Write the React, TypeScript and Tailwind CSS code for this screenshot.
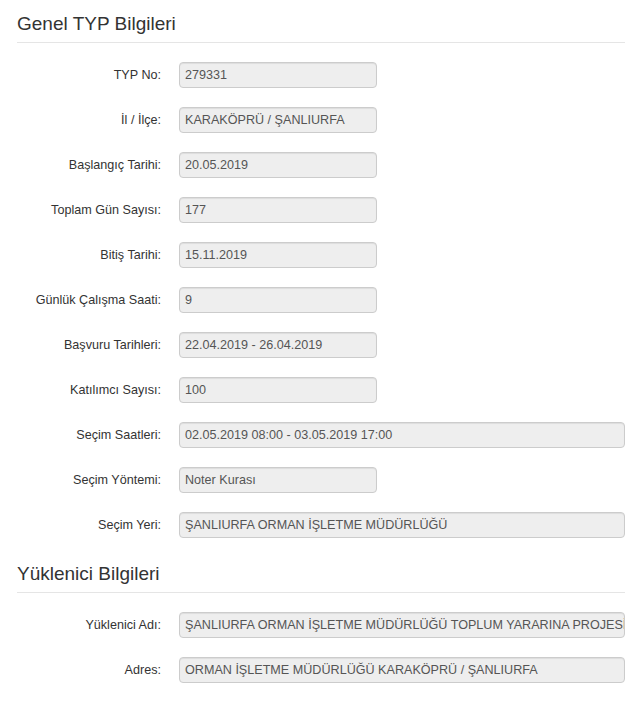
import React from "react";

type Row = { label: string; value: string; full?: boolean };

const genel: Row[] = [
  { label: "TYP No:", value: "279331" },
  { label: "İl / İlçe:", value: "KARAKÖPRÜ / ŞANLIURFA" },
  { label: "Başlangıç Tarihi:", value: "20.05.2019" },
  { label: "Toplam Gün Sayısı:", value: "177" },
  { label: "Bitiş Tarihi:", value: "15.11.2019" },
  { label: "Günlük Çalışma Saati:", value: "9" },
  { label: "Başvuru Tarihleri:", value: "22.04.2019 - 26.04.2019" },
  { label: "Katılımcı Sayısı:", value: "100" },
  { label: "Seçim Saatleri:", value: "02.05.2019 08:00 - 03.05.2019 17:00", full: true },
  { label: "Seçim Yöntemi:", value: "Noter Kurası" },
  { label: "Seçim Yeri:", value: "ŞANLIURFA ORMAN İŞLETME MÜDÜRLÜĞÜ", full: true },
];

const yuklenici: Row[] = [
  {
    label: "Yüklenici Adı:",
    value: "ŞANLIURFA ORMAN İŞLETME MÜDÜRLÜĞÜ TOPLUM YARARINA PROJESİ",
    full: true,
  },
  { label: "Adres:", value: "ORMAN İŞLETME MÜDÜRLÜĞÜ KARAKÖPRÜ / ŞANLIURFA", full: true },
];

function Heading({ children }: { children: React.ReactNode }) {
  return (
    <div className="text-[19px] leading-[20px] text-[#333] pb-[8px] border-b border-[#e5e5e5]">
      {children}
    </div>
  );
}

function FormRow({ row }: { row: Row }) {
  return (
    <div className="flex items-center mt-[19px]">
      <div className="w-[144px] shrink-0 text-right text-[12.6px] text-[#333] whitespace-nowrap">{row.label}</div>
      <div
        className={
          (row.full ? "flex-1 " : "w-[198px] ") +
          "ml-[18px] h-[26px] flex items-center px-[5px] bg-[#eee] border border-[#ccc] rounded-[4px] shadow-[inset_0_1px_1px_rgba(0,0,0,0.075)] text-[12.6px] text-[#555] whitespace-nowrap overflow-hidden"
        }
      >
        {row.value}
      </div>
    </div>
  );
}

export default function App() {
  return (
    <div
      className="w-[629px] h-[705px] bg-white pl-[17px] pr-[4px] pt-[14px]"
      style={{ fontFamily: '"Liberation Sans", Arial, sans-serif' }}
    >
      <Heading>Genel TYP Bilgileri</Heading>
      {genel.map((r) => (
        <FormRow key={r.label} row={r} />
      ))}
      <div className="mt-[26px]">
        <Heading>Yüklenici Bilgileri</Heading>
      </div>
      {yuklenici.map((r) => (
        <FormRow key={r.label} row={r} />
      ))}
    </div>
  );
}
